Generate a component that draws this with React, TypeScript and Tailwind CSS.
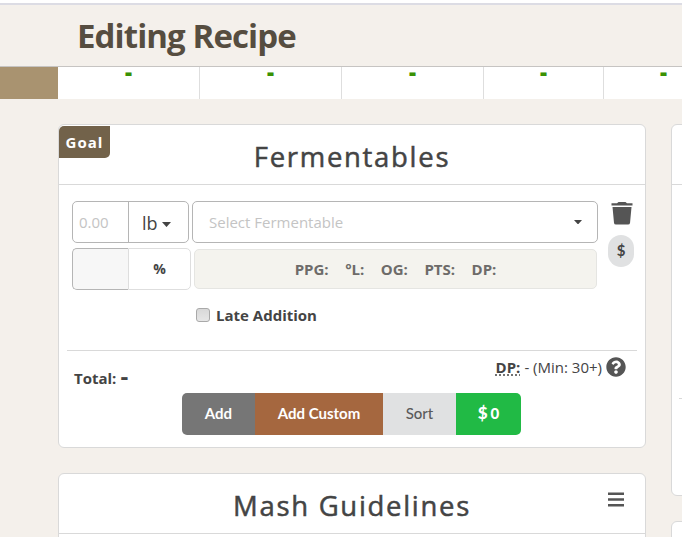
import React, { useState } from "react";

const stats = [
  { id: "og", width: "w-[141px]" },
  { id: "fg", width: "w-[141px]" },
  { id: "abv", width: "w-[141px]" },
  { id: "ibu", width: "w-[119px]" },
  { id: "srm", width: "w-[119px]" },
];

const specs = ["PPG:", "°L:", "OG:", "PTS:", "DP:"];

const TrashIcon = () => (
  <svg className="ml-0.5" width="22" height="24" viewBox="0 0 22 24" fill="#555555">
    <path d="M0.5 4.5V2.300H6L7.500 1H14.5L16 2.300H21.5V4.500Z" />
    <path d="M1.5 6H20.5L19 22Q18.8 23.500 17 23.500H5Q3.200 23.500 3 22Z" />
  </svg>
);

const HelpIcon = () => (
  <svg className="mt-px" width="20" height="20" viewBox="0 0 512 512" fill="#555555">
    <path d="M504 256c0 137-111 248-248 248S8 393 8 256 119 8 256 8s248 111 248 248zM262.700 90c-54.500 0-89.300 23-116.500 63.800-3.500 5.300-2.400 12.400 2.700 16.300l34.700 26.300c5.200 3.900 12.600 3 16.700-2.100 17.900-22.700 30.100-35.800 57.300-35.800 20.400 0 45.700 13.100 45.700 33 0 15-12.400 22.700-32.500 34C247.100 238.500 216 254.900 216 296v4c0 6.600 5.400 12 12 12h56c6.600 0 12-5.400 12-12v-1.300c0-28.500 83.200-29.600 83.200-106.700 0-58-60.200-102-116.500-102zM256 338c-25.400 0-46 20.600-46 46s20.600 46 46 46 46-20.600 46-46-20.600-46-46-46z" />
  </svg>
);

const Caret = ({ className = "w-2" }: { className?: string }) => (
  <svg className={className} viewBox="0 0 8 4.5" fill="#444444">
    <path d="M0 0H8L4 4.500Z" />
  </svg>
);

const MenuIcon = () => (
  <svg width="16" height="15" viewBox="0 0 16 15" fill="#555555">
    <path d="M0 0.500H16V3H0ZM0 6.200H16V8.700H0ZM0 11.900H16V14.400H0Z" />
  </svg>
);

const CardHeader = ({ title, children }: { title: string; children?: React.ReactNode }) => (
  <div className="relative flex h-[60px] items-center justify-center border-b border-[#d9d9d9]">
    <h2 className="pt-[5px] text-[27.5px] font-medium tracking-[1.7px] text-[#444444] [-webkit-text-stroke:0.5px_#444444]">{title}</h2>
    {children}
  </div>
);

const App = () => {
  const [late, setLate] = useState(false);

  return (
    <div className="h-[537px] w-[682px] overflow-hidden bg-[#f4f0eb] font-['Open_Sans',sans-serif] text-[#444444]">
      <div className="h-[5px] border-b-2 border-[#dcdce4] bg-white" />
      <header className="flex h-[62px] items-center border-b border-[#c6c4c2] pb-px pl-[77px]">
        <h1 className="text-[33px] leading-none font-bold tracking-[-0.9px] text-[#564d40]">Editing Recipe</h1>
      </header>

      <div className="flex h-8 w-[724px] bg-white">
        <div className="w-[58px] shrink-0 bg-[#a99370]" />
        {stats.map((stat) => (
          <div
            key={stat.id}
            className={`${stat.width} box-content flex shrink-0 justify-center border-r border-[#dedede] text-[22px] leading-[14px] font-extrabold text-[#3a9104]`}
          >
            <span className="-mt-[3px]">-</span>
          </div>
        ))}
      </div>

      <div className="flex w-[1280px] gap-[25px] pt-[25px] pl-[58px]">
        <div className="flex w-[588px] flex-col gap-[25px]">
          <section className="h-[324px] rounded-md border border-[#d9d9d9] bg-white">
            <CardHeader title="Fermentables">
              <span className="absolute top-px left-0 flex h-8 w-[51px] items-center justify-center rounded-tl-[5px] rounded-br-[5px] bg-[#72624a] text-[15px] font-bold tracking-[1px] text-white">
                Goal
              </span>
            </CardHeader>

            <div className="flex h-[165px] pt-4 pl-[13px]">
              <div className="flex w-[526px] flex-col">
                <div className="flex h-[42px] gap-[3px]">
                  <div className="flex w-[117px] rounded-[5px] border border-[#b5b5b5]">
                    <input className="w-[56px] border-r border-[#b5b5b5] pl-[6px] text-[15px] placeholder:text-[#c4c4c4]" placeholder="0.00" />
                    <button className="flex flex-1 items-center gap-[4px] pt-px pl-[13px] text-lg">
                      lb <Caret className="mt-1 w-[9px]" />
                    </button>
                  </div>
                  <button className="flex w-[406px] items-center justify-between rounded-[5px] border border-[#b5b5b5] pr-[15px] pl-4 text-[15px] text-[#c4c4c4]">
                    Select Fermentable <Caret />
                  </button>
                </div>

                <div className="mt-[5px] flex h-[42px] items-center gap-[3px]">
                  <div className="flex h-[42px] w-[119px]">
                    <div className="w-[56px] rounded-l-[5px] border border-r-0 border-[#b5b5b5] bg-[#f7f7f7]" />
                    <div className="flex flex-1 items-center justify-center rounded-r-[5px] border border-[#dedede] text-sm font-bold">%</div>
                  </div>
                  <div className="flex h-10 w-[403px] items-center justify-center gap-[16.5px] rounded-[5px] border border-[#e5e5e2] bg-[#f4f3ee] text-[15px] font-bold text-[#6d6b69]">
                    {specs.map((spec) => (
                      <span key={spec}>{spec}</span>
                    ))}
                  </div>
                </div>

                <label className="mt-[14px] flex items-center gap-1.5 pl-[124px] text-[15px] font-bold">
                  <input
                    type="checkbox"
                    checked={late}
                    onChange={(e) => setLate(e.target.checked)}
                    className="h-3.5 w-3.5 appearance-none rounded-[3px] border border-[#a9a9a9] bg-linear-to-b from-[#d8d8d8] to-[#e6e6e6]"
                  />
                  Late Addition
                </label>
              </div>
              <div className="flex w-[46px] flex-col items-center gap-[10px]">
                <TrashIcon />
                <button className="flex h-8 w-[26px] items-center justify-center rounded-full bg-[#e0e1e2] pb-0.5 font-['Lato',sans-serif] text-[15px] font-bold">
                  $
                </button>
              </div>
            </div>

            <div className="mx-2 flex h-[43px] justify-between border-t border-[#d9d9d9] pr-[11px] pl-[7px] text-[15px]">
              <div className="flex pt-4 font-bold">
                Total:<span className="ml-1 -mt-px text-[24px] leading-5">-</span>
              </div>
              <div className="flex items-start pt-[5px]">
                <span className="font-bold underline decoration-dotted underline-offset-2">DP:</span>
                <span className="mr-1 ml-1">- (Min: 30+)</span>
                <HelpIcon />
              </div>
            </div>

            <div className="ml-[123px] flex h-[42px] w-[339px] overflow-hidden rounded-[5px] font-['Lato',sans-serif] text-[15px] font-bold text-white">
              <button className="w-[73px] bg-[#767676] pb-0.5">Add</button>
              <button className="w-[128px] bg-[#a5673f] pb-0.5">Add Custom</button>
              <button className="w-[73px] bg-[#e0e1e2] pb-0.5 font-medium text-[#5a5a5a]">Sort</button>
              <button className="flex w-[65px] items-center justify-center gap-[3px] bg-[#21ba45] pb-0.5 font-black">
                <span className="text-[17px]">$</span>
                <span>0</span>
              </button>
            </div>
          </section>

          <section className="h-[200px] rounded-md border border-[#d9d9d9] bg-white">
            <CardHeader title="Mash Guidelines">
              <button className="absolute top-[18px] right-[21px]">
                <MenuIcon />
              </button>
            </CardHeader>
          </section>
        </div>

        <div className="flex w-[588px] flex-col gap-[25px]">
          <section className="h-[372px] rounded-md border border-[#d9d9d9] bg-white">
            <div className="h-[60px] border-b border-[#d9d9d9]" />
            <div className="mx-[7px] h-[214px] border-b border-[#d9d9d9]" />
          </section>
          <section className="h-[200px] rounded-md border border-[#d9d9d9] bg-white" />
        </div>
      </div>
    </div>
  );
};

export default App;
